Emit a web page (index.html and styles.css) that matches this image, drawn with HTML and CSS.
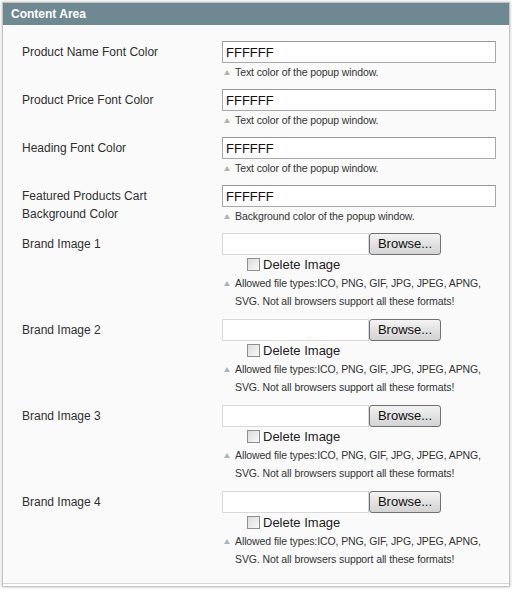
FILE: index.html
```html
<!DOCTYPE html>
<html lang="en">
<head>
  <meta charset="UTF-8" />
  <title>Content Area</title>
  <link rel="stylesheet" href="styles.css">
</head>
<body>

  <div class="section">
    <div class="section-head">Content Area</div>
    <div class="section-body">

      <div class="row">
        <div class="label">Product Name Font Color</div>
        <div class="value">
          <input class="text-input" type="text" value="FFFFFF" />
          <p class="note">Text color of the popup window.</p>
        </div>
      </div>

      <div class="row">
        <div class="label">Product Price Font Color</div>
        <div class="value">
          <input class="text-input" type="text" value="FFFFFF" />
          <p class="note">Text color of the popup window.</p>
        </div>
      </div>

      <div class="row">
        <div class="label">Heading Font Color</div>
        <div class="value">
          <input class="text-input" type="text" value="FFFFFF" />
          <p class="note">Text color of the popup window.</p>
        </div>
      </div>

      <div class="row">
        <div class="label">Featured Products Cart<br>Background Color</div>
        <div class="value">
          <input class="text-input" type="text" value="FFFFFF" />
          <p class="note">Background color of the popup window.</p>
        </div>
      </div>

      <div class="row brand">
        <div class="label">Brand Image 1</div>
        <div class="value">
          <div class="file"><span class="file-name"></span><button class="browse">Browse...</button></div>
          <label class="delete"><span class="check"></span>Delete Image</label>
          <p class="note">Allowed file types:ICO, PNG, GIF, JPG, JPEG, APNG,<br>SVG. Not all browsers support all these formats!</p>
        </div>
      </div>

      <div class="row brand">
        <div class="label">Brand Image 2</div>
        <div class="value">
          <div class="file"><span class="file-name"></span><button class="browse">Browse...</button></div>
          <label class="delete"><span class="check"></span>Delete Image</label>
          <p class="note">Allowed file types:ICO, PNG, GIF, JPG, JPEG, APNG,<br>SVG. Not all browsers support all these formats!</p>
        </div>
      </div>

      <div class="row brand">
        <div class="label">Brand Image 3</div>
        <div class="value">
          <div class="file"><span class="file-name"></span><button class="browse">Browse...</button></div>
          <label class="delete"><span class="check"></span>Delete Image</label>
          <p class="note">Allowed file types:ICO, PNG, GIF, JPG, JPEG, APNG,<br>SVG. Not all browsers support all these formats!</p>
        </div>
      </div>

      <div class="row brand">
        <div class="label">Brand Image 4</div>
        <div class="value">
          <div class="file"><span class="file-name"></span><button class="browse">Browse...</button></div>
          <label class="delete"><span class="check"></span>Delete Image</label>
          <p class="note">Allowed file types:ICO, PNG, GIF, JPG, JPEG, APNG,<br>SVG. Not all browsers support all these formats!</p>
        </div>
      </div>

    </div>
    <div class="section-foot"></div>
  </div>

</body>
</html>
```

FILE: styles.css
```css
body {
  margin: 0;
  padding: 2px;
  background-color: #fff;
  font-family: 'Liberation Sans', Arial, sans-serif;
  font-size: 12px;
  color: #2f2f2f;
}

.section {
  width: 506px;
  border: 1px solid #c4c4c4;
  background-color: #fafafa;
  box-shadow: 0 0 3px rgba(0,0,0,0.25);
}

.section-head {
  height: 22px;
  line-height: 22px;
  padding: 0 8px;
  background-color: #6f8992;
  color: #fff;
  font-weight: bold;
  font-size: 12px;
}

.section-body {
  padding: 16px 0 6px 19px;
}

.section-foot {
  height: 2px;
  border-top: 1px solid #d8d8d8;
  background-color: #fff;
}

.row {
  display: flex;
  padding-bottom: 8px;
}

.row.brand {
  padding-bottom: 9px;
}

.label {
  width: 200px;
  padding-top: 2px;
  line-height: 18px;
  font-size: 12px;
}

.value {
  width: 274px;
}

.text-input {
  box-sizing: border-box;
  display: block;
  width: 274px;
  height: 22px;
  margin: 0;
  padding: 0 3px;
  border: 1px solid #aaa;
  border-top-color: #999;
  background-color: #fff;
  font-family: 'Liberation Sans', Arial, sans-serif;
  font-size: 13px;
  color: #111;
}

.note {
  position: relative;
  margin: 0;
  padding-left: 13px;
  line-height: 18px;
  font-size: 10.5px;
  letter-spacing: -0.1px;
  white-space: nowrap;
  color: #333;
}

.note::before {
  content: "";
  position: absolute;
  left: 2px;
  top: 7px;
  border-left: 3px solid transparent;
  border-right: 3px solid transparent;
  border-bottom: 5px solid #a9b5b9;
}

.file {
  display: flex;
  height: 22px;
}

.file-name {
  box-sizing: border-box;
  width: 147px;
  height: 22px;
  border: 1px solid #d9d9d9;
  background-color: #fff;
}

.browse {
  box-sizing: border-box;
  width: 72px;
  height: 22px;
  margin: 0;
  padding: 0 0 2px;
  border: 1px solid #707070;
  border-radius: 3px;
  background: linear-gradient(#f4f4f4, #e2e2e2 50%, #d4d4d4);
  font-family: 'Liberation Sans', Arial, sans-serif;
  font-size: 13px;
  color: #111;
}

.delete {
  display: flex;
  align-items: center;
  height: 19px;
  padding-left: 25px;
  font-size: 13px;
  color: #222;
}

.check {
  box-sizing: border-box;
  width: 13px;
  height: 13px;
  margin-right: 3px;
  border: 1px solid #8f8f8f;
  background: linear-gradient(135deg, #dcdcdc, #f8f8f8);
}
```
